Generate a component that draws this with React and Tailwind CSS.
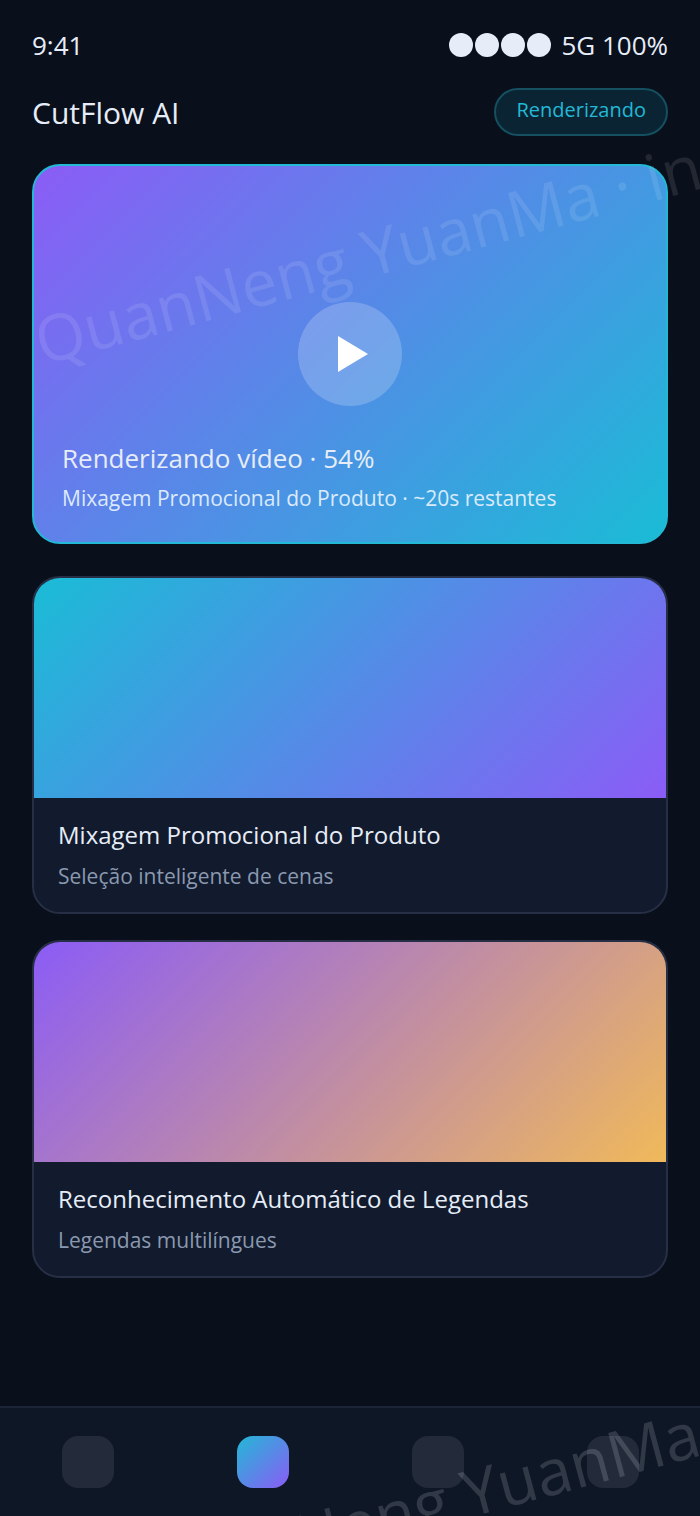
const font = "font-['Open_Sans',sans-serif]";

const Card = ({ gradient, title, subtitle }) => (
  <div className="rounded-[28px] border-2 border-[#262f45] bg-[#121b2d] overflow-hidden">
    <div className={`h-[220px] ${gradient}`}></div>
    <div className="px-6 pt-[20px] pb-[22px]">
      <p className="text-[24px] leading-[34px] text-[#e6edf8]">{title}</p>
      <p className="mt-[10px] text-[21px] leading-[28px] text-[#8a99b0]">{subtitle}</p>
    </div>
  </div>
);

const App = () => {
  return (
    <div className={`relative w-[700px] h-[1516px] overflow-hidden bg-[#090f1b] flex flex-col ${font}`}>
      <div className="flex justify-between items-center px-8 pt-[28px] h-[62px] text-[26px] text-[#e6edf8]">
        <span>9:41</span>
        <div className="flex items-center gap-[2px]">
          <span className="w-6 h-6 rounded-full bg-[#e6edf8]"></span>
          <span className="w-6 h-6 rounded-full bg-[#e6edf8]"></span>
          <span className="w-6 h-6 rounded-full bg-[#e6edf8]"></span>
          <span className="w-6 h-6 rounded-full bg-[#e6edf8]"></span>
          <span className="ml-[8px]">5G 100%</span>
        </div>
      </div>

      <div className="flex justify-between items-center px-8 mt-[26px]">
        <h1 className="text-[30px] font-normal text-[#e6edf8]">CutFlow AI</h1>
        <span className="h-12 px-5 pb-1 rounded-full border-2 border-[#14505f] bg-[#0b2433] text-[#22b8d6] text-[20px] flex items-center">
          Renderizando
        </span>
      </div>

      <div className="mx-8 mt-[28px] flex flex-col">
        <div className="relative h-[380px] rounded-[28px] border-2 border-[#22b8d6] bg-[linear-gradient(135deg,#8b5cf6,#1abcd6)] overflow-hidden">
          <div className="absolute left-1/2 top-[136px] -translate-x-1/2 w-[104px] h-[104px] rounded-full bg-white/20 flex items-center justify-center">
            <svg width="32" height="38" viewBox="0 0 32 38" className="ml-1.5">
              <path d="M1 1 L31 19 L1 37 Z" fill="#fff" />
            </svg>
          </div>
          <div className="absolute left-[28px] bottom-[28px]">
            <p className="text-[26px] leading-[36px] text-[#e6edf8]">Renderizando vídeo · 54%</p>
            <p className="mt-[6px] text-[21px] leading-[32px] text-[#dbeafe]">Mixagem Promocional do Produto · ~20s restantes</p>
          </div>
        </div>

        <div className="mt-[32px]">
          <Card
            gradient="bg-[linear-gradient(135deg,#1abcd6,#8b5cf6)]"
            title="Mixagem Promocional do Produto"
            subtitle="Seleção inteligente de cenas"
          />
        </div>
        <div className="mt-[26px]">
          <Card
            gradient="bg-[linear-gradient(135deg,#8b5cf6,#f0b95a)]"
            title="Reconhecimento Automático de Legendas"
            subtitle="Legendas multilíngues"
          />
        </div>
      </div>

      <div className="absolute left-0 right-0 bottom-0 h-[110px] border-t-2 border-[#1c2535] bg-[#0e1726] flex justify-around items-center">
        <span className="w-[52px] h-[52px] rounded-2xl bg-[#232b3b]"></span>
        <span className="w-[52px] h-[52px] rounded-2xl bg-[linear-gradient(135deg,#22b8d6,#8b5cf6)]"></span>
        <span className="w-[52px] h-[52px] rounded-2xl bg-[#232b3b]"></span>
        <span className="w-[52px] h-[52px] rounded-2xl bg-[#232b3b]"></span>
      </div>

      {/* watermark */}
      <div className="absolute left-[36px] top-[310px] origin-left -rotate-[15deg] text-[64px] leading-none whitespace-nowrap text-white/10 pointer-events-none">
        QuanNeng YuanMa · in
      </div>
      <div className="absolute left-[136px] top-[1550px] origin-left -rotate-[15deg] text-[64px] leading-none whitespace-nowrap text-white/15 pointer-events-none">
        QuanNeng YuanMa
      </div>
    </div>
  );
};

export default App;
